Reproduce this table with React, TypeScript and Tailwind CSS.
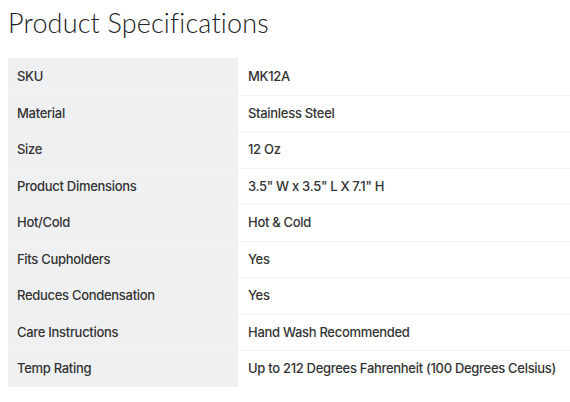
import React from "react";

const rows: [string, string][] = [
  ["SKU", "MK12A"],
  ["Material", "Stainless Steel"],
  ["Size", "12 Oz"],
  ["Product Dimensions", '3.5" W x 3.5" L X 7.1" H'],
  ["Hot/Cold", "Hot & Cold"],
  ["Fits Cupholders", "Yes"],
  ["Reduces Condensation", "Yes"],
  ["Care Instructions", "Hand Wash Recommended"],
  ["Temp Rating", "Up to 212 Degrees Fahrenheit (100 Degrees Celsius)"],
];

export default function App() {
  return (
    <div className="w-[570px] h-[402px] bg-white overflow-hidden">
      <h1 className="pl-[8px] pt-[7px] text-[27px] leading-[32px] font-light text-[#222] tracking-[0.15px] [font-family:Lato,sans-serif]">
        Product Specifications
      </h1>
      <div className="mt-[19px] ml-[8px] flex flex-col [font-family:Inter,sans-serif] text-[13px] tracking-[-0.3px] font-medium text-[#333]">
        {rows.map(([k, v], i) => (
          <div
            key={k}
            className={`flex h-[36.5px] ${i > 0 ? "border-t border-[#f4f4f4]" : ""}`}
          >
            <div className="w-[230px] bg-[#eff0f2] flex items-center pl-[9px] whitespace-nowrap">{k}</div>
            <div className="flex-1 bg-white flex items-center pl-[10px] whitespace-nowrap">{v}</div>
          </div>
        ))}
      </div>
    </div>
  );
}
